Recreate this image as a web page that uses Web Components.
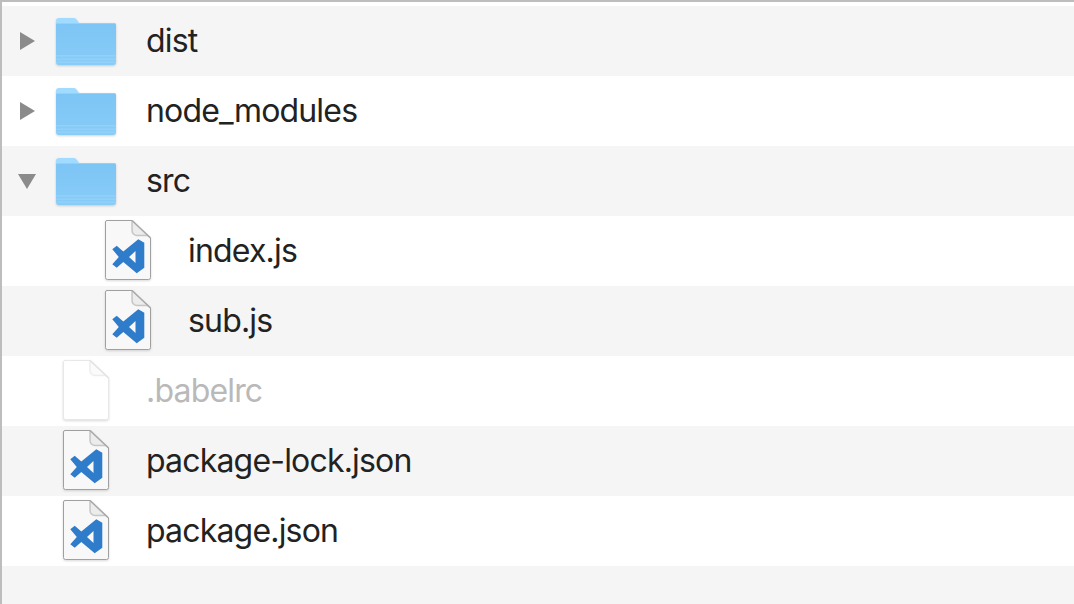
<!DOCTYPE html>
<html>
<head>
<meta charset="utf-8">
<title>files</title>
<style>
  html, body { margin: 0; height: 100%; }
  body { background: #f5f5f5; overflow: hidden; }
</style>
</head>
<body>
<file-list>
  <file-row kind="folder" twisty="closed">dist</file-row>
  <file-row kind="folder" twisty="closed">node_modules</file-row>
  <file-row kind="folder" twisty="open">src</file-row>
  <file-row kind="code" depth="1">index.js</file-row>
  <file-row kind="code" depth="1">sub.js</file-row>
  <file-row kind="blank" dim>.babelrc</file-row>
  <file-row kind="code">package-lock.json</file-row>
  <file-row kind="code">package.json</file-row>
</file-list>

<script>
const FOLDER = `
  <svg class="folder" width="60" height="48" viewBox="0 0 60 48">
    <defs>
      <linearGradient id="body" x1="0" y1="0" x2="0" y2="1">
        <stop offset="0" stop-color="#7dc5f5"/>
        <stop offset="1" stop-color="#88ccf8"/>
      </linearGradient>
    </defs>
    <path d="M0 4a3 3 0 0 1 3-3h14c2 0 3 .6 4 2.200L23 6h34a3 3 0 0 1 3 3v10H0z" fill="#a1dbff"/>
    <path d="M0 8a2 2 0 0 1 2-2h56a2 2 0 0 1 2 2v37a3 3 0 0 1-3 3H3a3 3 0 0 1-3-3z" fill="url(#body)"/>
    <path d="M1 6.500h58" stroke="#8fd2fa" stroke-width="1"/>
    <path d="M0 38h60v1.500H0zM0 41.500h60v1.500H0zM0 44.500h60v1.500H0z" fill="#91d1f9"/>
  </svg>`;

const doc = (stroke, fold, edge, paper, mark) => `
  <svg class="doc" width="46" height="60" viewBox="0 0 46 60">
    <path d="M2 .5H27L45.500 18V57.500a2 2 0 0 1-2 2H2.500a2 2 0 0 1-2-2V2A1.500 1.500 0 0 1 2 .5z" fill="${paper}" stroke="${stroke}"/>
    <path d="M27 .5 45.500 18 42 15.500H32a5 5 0 0 1-5-5z" fill="${fold}"/>
    <path d="M27 .5 45.500 18" fill="none" stroke="${edge}" stroke-width="1.500"/>
    <path d="M27 .5V10.500a5 5 0 0 0 5 5H43" fill="none" stroke="${edge}" stroke-opacity=".6" stroke-width="1.500"/>
    ${mark}
  </svg>`;

const VSCODE = `<path d="M33.300 19.300 39.300 22.700V47.700L31.700 53.300 18.300 42 11.700 47.700 7.300 44.300 13.800 37 7.300 29.300 11.700 25.800 18.300 31.500zM30.500 31 24 37 30.500 43z" fill-rule="evenodd" fill="#2f7ccb"/>`;

const ICONS = {
  folder: FOLDER,
  code: doc('#a0a0a0', '#ececec', '#a8a8a8', '#f8f8f8', VSCODE),
  blank: doc('#e8e8e8', '#fbfbfb', '#e2e2e2', '#ffffff', ''),
};

const TWISTY = {
  closed: '<svg width="15" height="18" viewBox="0 0 15 18"><path d="M0 0 15 9 0 18z" fill="#8b8b8b"/></svg>',
  open: '<svg width="18" height="15" viewBox="0 0 18 15"><path d="M0 0H18L9 15z" fill="#8b8b8b"/></svg>',
};

class FileList extends HTMLElement {
  constructor() {
    super();
    this.attachShadow({ mode: 'open' });
    this.shadowRoot.innerHTML = `
      <style>
        :host {
          display: block;
          height: 604px;
          box-sizing: border-box;
          padding-top: 4px;
          border-top: 2px solid #bdbdbd;
          border-left: 2px solid #bdbdbd;
          background: linear-gradient(#fff, #fff) top / 100% 4px no-repeat, #f5f5f5;
          font-family: Inter, "Liberation Sans", Arial, sans-serif;
          font-size: 32px;
          letter-spacing: -0.82px;
          color: #222;
        }
        ::slotted(file-row:nth-child(even)) { background: #fff; }
        ::slotted(file-row:nth-child(odd)) { background: #f5f5f5; }
      </style>
      <slot></slot>
    `;
  }
}

class FileRow extends HTMLElement {
  constructor() {
    super();
    this.attachShadow({ mode: 'open' });
  }

  connectedCallback() {
    let kind = this.getAttribute('kind');
    let twisty = this.getAttribute('twisty');
    let depth = parseInt(this.getAttribute('depth') || 0);
    this.shadowRoot.innerHTML = `
      <style>
        :host {
          display: flex;
          align-items: center;
          height: 70px;
          padding-left: ${depth * 42}px;
        }
        :host([dim]) { color: #b9b9b9; }
        #twisty {
          display: flex;
          justify-content: center;
          width: 50px;
          margin-right: 4px;
        }
        #icon {
          display: flex;
          justify-content: center;
          width: 60px;
          margin-right: 30px;
        }
        svg { display: block; }
        svg.doc {
          margin-bottom: 2px;
          filter: drop-shadow(0 1px 1px rgba(0, 0, 0, .15));
        }
        svg.folder { filter: drop-shadow(0 1px 1px rgba(0, 0, 0, .18)); }
        #label { white-space: pre; padding-bottom: 2px; }
      </style>
      <span id="twisty">${TWISTY[twisty] || ''}</span>
      <span id="icon">${ICONS[kind]}</span>
      <span id="label"><slot></slot></span>
    `;
  }
}

customElements.define('file-list', FileList);
customElements.define('file-row', FileRow);
</script>
</body>
</html>
